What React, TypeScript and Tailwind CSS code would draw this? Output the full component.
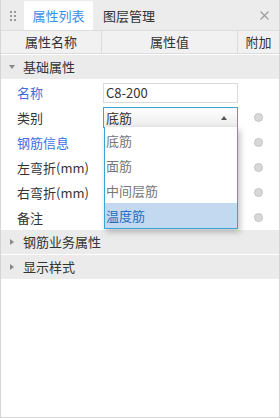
import React from "react";

const font = { fontFamily: '"Noto Sans CJK SC", "Noto Sans", sans-serif' };

function Radio() {
  return <span className="block w-[9px] h-[9px] rounded-full bg-[#d8d8d8] border border-[#c4c4c4]" />;
}

function Group({ label, open }: { label: string; open?: boolean }) {
  return (
    <div className="h-[24px] bg-[#ebebeb] flex items-center text-[13px] text-[#333]">
      <span className="w-[22px] flex justify-center text-[#8a8a8a]">
        {open ? (
          <svg width="6" height="4" viewBox="0 0 6 4"><path d="M0 0 L6 0 L3 4 Z" fill="#8a8a8a" /></svg>
        ) : (
          <svg width="4" height="6" viewBox="0 0 4 6"><path d="M0 0 L4 3 L0 6 Z" fill="#8a8a8a" /></svg>
        )}
      </span>
      <span>{label}</span>
    </div>
  );
}

function Row({ label, blue, children, radio }: { label: string; blue?: boolean; children?: React.ReactNode; radio?: boolean }) {
  return (
    <div className="h-[25px] flex items-center text-[13px]">
      <div className={`w-[102px] pl-[16px] ${blue ? "text-[#3d6fe0]" : "text-[#333]"}`}>{label}</div>
      <div className="w-[135px] h-full flex items-center relative">{children}</div>
      <div className="flex-1 flex justify-center">{radio && <Radio />}</div>
    </div>
  );
}

export default function App() {
  const items = ["底筋", "面筋", "中间层筋", "温度筋"];
  return (
    <div style={font} className="w-[280px] h-[418px] bg-white border-x border-b border-[#d6d6d6] flex flex-col">
      <div className="h-[30px] bg-[#ececec] flex items-end">
        <div className="w-[23px] h-[29px] flex items-center justify-center">
          <div className="grid grid-cols-2 gap-x-[2px] gap-y-[2px]">
            {[0, 1, 2, 3, 4, 5].map((i) => (
              <span key={i} className="w-[2px] h-[2px] bg-[#9a9a9a]" />
            ))}
          </div>
        </div>
        <div className="w-[69px] h-[29px] bg-white flex items-center justify-center text-[13px] text-[#3b8de8]">属性列表</div>
        <div className="h-[29px] flex items-center pl-[10px] text-[13px] text-[#333]">图层管理</div>
        <div className="flex-1" />
        <div className="h-[29px] w-[30px] flex items-center justify-center">
          <svg width="9" height="9" viewBox="0 0 9 9"><path d="M0.5 0.5 L8.5 8.5 M8.5 0.5 L0.5 8.5" stroke="#9a9a9a" strokeWidth="1.1" /></svg>
        </div>
      </div>
      <div className="h-[24px] bg-[#f1f1f1] border-y border-[#dcdcdc] flex text-[13px] text-[#333]">
        <div className="w-[101px] flex items-center justify-center border-r border-[#dcdcdc]">属性名称</div>
        <div className="w-[136px] flex items-center justify-center border-r border-[#dcdcdc]">属性值</div>
        <div className="flex-1 flex items-center justify-center">附加</div>
      </div>
      <div className="h-[1px]" />
      <Group label="基础属性" open />
      <div className="h-[1px]" />
      <Row label="名称" blue>
        <div className="w-[135px] h-[20px] border border-[#dadada] flex items-center pl-[2px] text-[#333] bg-white">C8-200</div>
      </Row>
      <Row label="类别" radio>
        <div className="w-[135px] h-[21px] border border-[#3aa6d6] flex items-center pl-[2px] text-[#333] bg-gradient-to-b from-white to-[#ececec]">
          <span className="flex-1">底筋</span>
          <svg className="mr-[10px]" width="6" height="4" viewBox="0 0 6 4"><path d="M3 0 L6 4 L0 4 Z" fill="#555" /></svg>
        </div>
        <div className="absolute left-[1px] top-[22px] w-[134px] border border-[#3aa6d6] border-t-0 bg-white shadow-[2px_3px_6px_rgba(0,0,0,0.25)] z-10 pt-[1px]">
          {items.map((it, i) => (
            <div key={it} className={`h-[25px] flex items-center pl-[1px] ${i === 3 ? "bg-[#c3d9f0] text-[#2a6fc0]" : "text-[#777]"}`}>{it}</div>
          ))}
        </div>
      </Row>
      <Row label="钢筋信息" blue radio />
      <Row label="左弯折(mm)" radio />
      <Row label="右弯折(mm)" radio />
      <Row label="备注" radio />
      <Group label="钢筋业务属性" />
      <div className="h-[1px]" />
      <Group label="显示样式" />
    </div>
  );
}
